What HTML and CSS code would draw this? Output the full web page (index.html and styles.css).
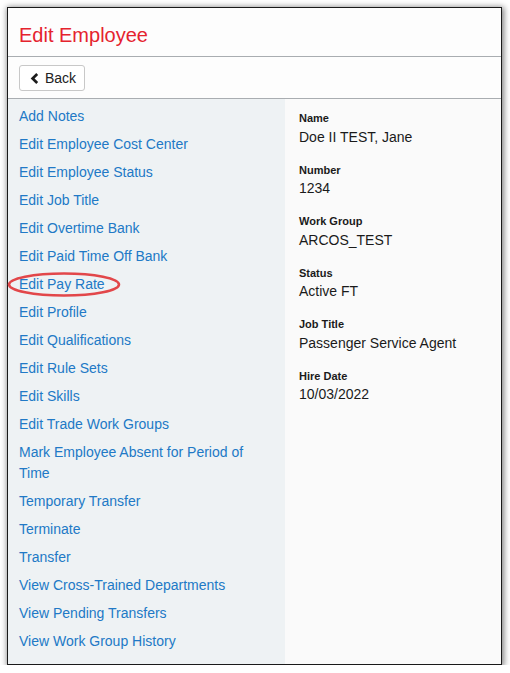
FILE: index.html
```html
<!DOCTYPE html>
<html lang="en">
<head>
<meta charset="utf-8">
<title>Edit Employee</title>
<link rel="stylesheet" href="styles.css">
</head>
<body>
<div class="frame">
  <header class="page-header">
    <h1 class="title">Edit Employee</h1>
  </header>
  <div class="toolbar">
    <button class="btn-back" type="button">
      <svg class="chev" width="9" height="11" viewBox="0 0 9 11" aria-hidden="true"><path d="M7.2 1 L2.6 5.5 L7.2 10" fill="none" stroke="#1c1c1c" stroke-width="2.7" stroke-linecap="butt" stroke-linejoin="miter"/></svg>
      <span>Back</span>
    </button>
  </div>
  <div class="main">
    <nav class="menu">
      <a class="menu-link" href="#">Add Notes</a>
      <a class="menu-link" href="#">Edit Employee Cost Center</a>
      <a class="menu-link" href="#">Edit Employee Status</a>
      <a class="menu-link" href="#">Edit Job Title</a>
      <a class="menu-link" href="#">Edit Overtime Bank</a>
      <a class="menu-link" href="#">Edit Paid Time Off Bank</a>
      <a class="menu-link" href="#">Edit Pay Rate</a>
      <a class="menu-link" href="#">Edit Profile</a>
      <a class="menu-link" href="#">Edit Qualifications</a>
      <a class="menu-link" href="#">Edit Rule Sets</a>
      <a class="menu-link" href="#">Edit Skills</a>
      <a class="menu-link" href="#">Edit Trade Work Groups</a>
      <a class="menu-link" href="#">Mark Employee Absent for Period of Time</a>
      <a class="menu-link" href="#">Temporary Transfer</a>
      <a class="menu-link" href="#">Terminate</a>
      <a class="menu-link" href="#">Transfer</a>
      <a class="menu-link" href="#">View Cross-Trained Departments</a>
      <a class="menu-link" href="#">View Pending Transfers</a>
      <a class="menu-link" href="#">View Work Group History</a>
    </nav>
    <section class="details">
      <div class="field"><div class="label">Name</div><div class="value">Doe II TEST, Jane</div></div>
      <div class="field"><div class="label">Number</div><div class="value">1234</div></div>
      <div class="field"><div class="label">Work Group</div><div class="value">ARCOS_TEST</div></div>
      <div class="field"><div class="label">Status</div><div class="value">Active FT</div></div>
      <div class="field"><div class="label">Job Title</div><div class="value">Passenger Service Agent</div></div>
      <div class="field"><div class="label">Hire Date</div><div class="value">10/03/2022</div></div>
    </section>
  </div>
  <svg class="highlight" width="116" height="28" viewBox="0 0 116 28" aria-hidden="true"><ellipse cx="57" cy="13.5" rx="55" ry="11" fill="none" stroke="#e2474a" stroke-width="2.6"/></svg>
</div>
</body>
</html>
```
FILE: styles.css
```css
html, body {
  margin: 0;
  padding: 0;
  background: #ffffff;
}
body {
  font-family: "Liberation Sans", Arial, sans-serif;
  font-size: 14px;
  color: #222;
}
.frame {
  position: relative;
  margin: 7px 0 0 7px;
  width: 493px;
  height: 656px;
  border: 1px solid #1a1a1a;
  box-shadow: 1px 1px 6px 1px rgba(0, 0, 0, 0.5);
  background: #fdfdfd;
  display: flex;
  flex-direction: column;
}
.page-header {
  padding: 16px 11px 10px;
  border-bottom: 1px solid #a9adb1;
  background: #fdfdfd;
}
.title {
  margin: 0;
  font-size: 20px;
  line-height: 22px;
  font-weight: normal;
  color: #e5232e;
}
.toolbar {
  padding: 8px 11px 7px;
  border-bottom: 1px solid #a9adb1;
  background: #fdfdfd;
  display: flex;
}
.btn-back {
  box-sizing: border-box;
  height: 26px;
  padding: 0 8px 0 10px;
  display: flex;
  align-items: center;
  gap: 6px;
  border: 1px solid #c8c8c8;
  border-radius: 3px;
  background: #ffffff;
  font-family: "Liberation Sans", Arial, sans-serif;
  font-size: 14px;
  color: #222;
}
.chev {
  display: block;
}
.main {
  flex: 1;
  display: flex;
}
.menu {
  box-sizing: border-box;
  width: 277px;
  background: #eef2f4;
  padding: 3px 11px 0;
  display: flex;
  flex-direction: column;
}
.menu-link {
  display: block;
  padding: 4px 0 3px;
  line-height: 21px;
  color: #2179c6;
  text-decoration: none;
}
.details {
  flex: 1;
  background: #fafafa;
  padding: 12px 14px 0;
}
.field {
  margin-bottom: 16px;
}
.label {
  font-size: 11px;
  line-height: 15px;
  font-weight: bold;
  color: #1a1a1a;
  margin-bottom: 0.5px;
}
.value {
  font-size: 14px;
  line-height: 20px;
  color: #1a1a1a;
}
.highlight {
  position: absolute;
  left: -1px;
  top: 263px;
}
```
